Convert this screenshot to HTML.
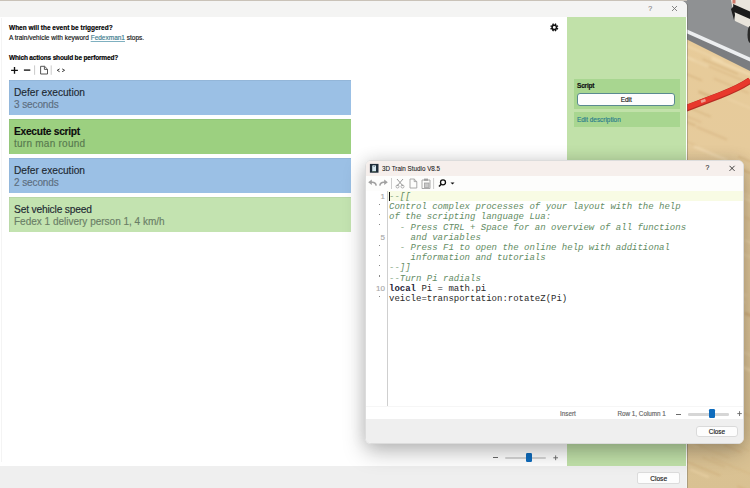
<!DOCTYPE html>
<html><head><meta charset="utf-8">
<style>
*{box-sizing:border-box;margin:0;padding:0}
html,body{width:750px;height:488px;overflow:hidden}
body{position:relative;font-family:"Liberation Sans",sans-serif;color:#1a1a1a;-webkit-text-stroke:0.15px currentColor;
background:linear-gradient(160deg,#e2c697 0%,#d9b987 40%,#dcc192 70%,#d3b483 100%);}
.abs{position:absolute}
.t{position:absolute;white-space:pre;line-height:1}
/* scene */
#scene{position:absolute;left:686px;top:0;width:64px;height:488px;overflow:hidden}
/* main dialog */
#main{position:absolute;left:0;top:1px;width:687px;height:487px;background:#fff;border-radius:0 6px 0 0}
#rborder{position:absolute;left:686px;top:16px;width:1px;height:472px;background:rgba(255,255,255,0.35)}
#rline{position:absolute;left:687px;top:4px;width:1px;height:484px;background:rgba(90,90,80,0.35)}
#topline{position:absolute;left:0;top:0;width:687px;height:1px;background:#c9c2b8}
#tb1{position:absolute;left:0;top:0;width:687px;height:16px;background:#f4f4f3;border-radius:0 6px 0 0}
#green{position:absolute;left:567px;top:16px;width:119px;height:450px;background:#c1e1a9}
#bb1{position:absolute;left:0;top:465px;width:687px;height:23px;background:#efefef}
.card{position:absolute;left:9px;width:342px;height:35px;box-shadow:inset 0 1px 0 rgba(0,0,0,0.05),inset 1px 0 0 rgba(0,0,0,0.04)}
.card .a{position:absolute;left:5px;top:7.7px;letter-spacing:-0.03px;font-size:10.2px;line-height:1;white-space:pre;color:#1e2a33}
.card .b{position:absolute;left:5px;top:20.4px;letter-spacing:-0.1px;font-size:10px;line-height:1;white-space:pre;color:#5d6e7f}
.blue{background:#9bc0e5}
.g1{background:#9cd080}
.g2{background:#c3e3b0}
.btn{position:absolute;background:#fdfdfd;border:1px solid #d3d3d3;border-radius:3px;font-size:6.4px;text-align:center;color:#1a1a1a}
/* dialog 2 */
#d2shadow{position:absolute;left:365px;top:160px;width:379px;height:284px;border-radius:6px;box-shadow:0 8px 22px rgba(0,0,0,0.26),0 0 16px rgba(0,0,0,0.10)}
#d2{position:absolute;left:365px;top:160px;width:379px;height:284px;background:#fff;border-radius:6px;overflow:hidden;border:1px solid #dcdcdc}
#tb2{position:absolute;left:0;top:0;width:100%;height:15px;background:#f6efec}
#tool2{position:absolute;left:0;top:15px;width:100%;height:15px;background:#fdfdfc}
#editor{position:absolute;left:0;top:30px;width:100%;height:215px;background:#fff}
#gutterline{position:absolute;left:21px;top:30px;width:1px;height:215px;background:#cfcfcf}
#hl{position:absolute;left:22px;top:30px;width:356px;height:10px;background:#f8fbe4}
.code{position:absolute;left:23px;font-family:"Liberation Mono",monospace;font-size:9px;line-height:10.2px;white-space:pre;-webkit-text-stroke:0}
.cm{color:#638c64;font-style:italic}
.kw{color:#25253a;font-weight:bold}
.nm{color:#2a2a2a}
.dot{position:absolute;left:12.5px;width:1.2px;height:1.2px;background:#8a8a8a}
.ln{position:absolute;right:358px;font-family:"Liberation Sans",sans-serif;font-size:8px;color:#a8a8a8;text-align:right;white-space:pre}
#status2{position:absolute;left:0;top:245px;width:100%;height:13px;background:#fff;border-top:1px solid #f6f6f6}
#bb2{position:absolute;left:0;top:258px;width:100%;height:25px;background:#efefef}
</style></head><body>

<div id="scene">
  <svg width="64" height="488" style="position:absolute;left:0;top:0">
    <defs>
      <linearGradient id="wood" x1="0" y1="0" x2="0" y2="1">
        <stop offset="0" stop-color="#e8cb98"/>
        <stop offset="0.3" stop-color="#e6cb9c"/>
        <stop offset="0.7" stop-color="#dfc699"/>
        <stop offset="1" stop-color="#d9c192"/>
      </linearGradient>
      <filter id="blur1"><feGaussianBlur stdDeviation="0.9"/></filter>
    </defs>
    <rect x="0" y="0" width="64" height="488" fill="url(#wood)"/>
    <g filter="url(#blur1)"><path d="M-13.1,100.9 L24.7,116.8" stroke="#c79f68" stroke-opacity="0.55" stroke-width="1.2"/><path d="M16.4,457.6 L39.0,467.0" stroke="#c79f68" stroke-opacity="0.43" stroke-width="1.1"/><path d="M-39.7,229.5 L4.3,248.0" stroke="#c79f68" stroke-opacity="0.58" stroke-width="2.1"/><path d="M16.5,59.1 L52.0,74.0" stroke="#c79f68" stroke-opacity="0.59" stroke-width="1.1"/><path d="M47.9,166.1 L67.9,174.5" stroke="#c79f68" stroke-opacity="0.47" stroke-width="2.0"/><path d="M27.7,78.4 L62.7,93.1" stroke="#d0aa75" stroke-opacity="0.41" stroke-width="2.0"/><path d="M-42.8,58.0 L-20.6,67.3" stroke="#f6e2bb" stroke-opacity="0.43" stroke-width="1.6"/><path d="M16.8,243.0 L42.2,253.7" stroke="#d0aa75" stroke-opacity="0.51" stroke-width="1.4"/><path d="M15.5,276.8 L61.1,296.0" stroke="#f3dcb2" stroke-opacity="0.39" stroke-width="2.8"/><path d="M-36.5,226.5 L5.0,243.9" stroke="#d0aa75" stroke-opacity="0.58" stroke-width="1.8"/><path d="M59.7,66.5 L94.2,81.0" stroke="#f6e2bb" stroke-opacity="0.40" stroke-width="1.6"/><path d="M6.6,404.5 L24.0,411.9" stroke="#c79f68" stroke-opacity="0.58" stroke-width="1.9"/><path d="M25.7,58.5 L65.3,75.1" stroke="#f6e2bb" stroke-opacity="0.60" stroke-width="2.5"/><path d="M-17.6,211.3 L20.8,227.5" stroke="#c79f68" stroke-opacity="0.58" stroke-width="1.6"/><path d="M19.6,262.0 L42.3,271.5" stroke="#f6e2bb" stroke-opacity="0.34" stroke-width="1.4"/><path d="M-5.4,439.6 L12.4,447.1" stroke="#f3dcb2" stroke-opacity="0.42" stroke-width="1.5"/><path d="M-34.4,232.3 L-0.1,246.7" stroke="#f3dcb2" stroke-opacity="0.60" stroke-width="2.2"/><path d="M-6.6,138.5 L11.3,146.0" stroke="#d0aa75" stroke-opacity="0.37" stroke-width="1.4"/><path d="M5.3,306.9 L29.5,317.1" stroke="#c79f68" stroke-opacity="0.34" stroke-width="2.0"/><path d="M19.5,179.7 L38.9,187.9" stroke="#f6e2bb" stroke-opacity="0.59" stroke-width="2.2"/><path d="M34.3,244.6 L79.8,263.7" stroke="#f6e2bb" stroke-opacity="0.42" stroke-width="1.7"/><path d="M-38.2,328.1 L-21.0,335.3" stroke="#c79f68" stroke-opacity="0.60" stroke-width="1.8"/><path d="M-37.5,312.3 L-18.9,320.1" stroke="#f6e2bb" stroke-opacity="0.35" stroke-width="1.2"/><path d="M-8.5,42.0 L37.1,61.1" stroke="#f6e2bb" stroke-opacity="0.41" stroke-width="2.1"/><path d="M58.9,313.1 L90.5,326.3" stroke="#c79f68" stroke-opacity="0.55" stroke-width="2.8"/><path d="M3.1,257.4 L21.1,265.0" stroke="#c79f68" stroke-opacity="0.52" stroke-width="2.3"/><path d="M4.6,355.3 L37.6,369.2" stroke="#d0aa75" stroke-opacity="0.59" stroke-width="2.0"/><path d="M-33.3,285.3 L-17.3,292.0" stroke="#f6e2bb" stroke-opacity="0.39" stroke-width="2.2"/><path d="M-39.6,427.4 L-6.5,441.3" stroke="#d0aa75" stroke-opacity="0.41" stroke-width="1.4"/><path d="M11.7,266.3 L49.0,281.9" stroke="#f6e2bb" stroke-opacity="0.54" stroke-width="2.8"/><path d="M47.2,408.9 L90.8,427.2" stroke="#d0aa75" stroke-opacity="0.36" stroke-width="1.9"/><path d="M33.3,495.1 L76.0,513.0" stroke="#f3dcb2" stroke-opacity="0.38" stroke-width="2.2"/><path d="M59.0,240.2 L106.8,260.3" stroke="#f6e2bb" stroke-opacity="0.59" stroke-width="1.7"/><path d="M-24.9,136.6 L-3.0,145.8" stroke="#d0aa75" stroke-opacity="0.44" stroke-width="2.8"/><path d="M19.6,30.9 L66.4,50.6" stroke="#f6e2bb" stroke-opacity="0.54" stroke-width="1.2"/><path d="M25.3,457.6 L67.7,475.4" stroke="#d0aa75" stroke-opacity="0.44" stroke-width="1.3"/><path d="M40.0,186.3 L83.0,204.4" stroke="#f3dcb2" stroke-opacity="0.44" stroke-width="2.3"/><path d="M-40.3,104.7 L9.4,125.6" stroke="#c79f68" stroke-opacity="0.35" stroke-width="2.6"/><path d="M41.9,98.7 L85.9,117.2" stroke="#f3dcb2" stroke-opacity="0.50" stroke-width="1.6"/><path d="M12.5,91.6 L28.0,98.1" stroke="#c79f68" stroke-opacity="0.46" stroke-width="2.7"/><path d="M-0.5,439.7 L43.4,458.2" stroke="#d0aa75" stroke-opacity="0.31" stroke-width="1.4"/><path d="M7.1,388.9 L33.5,400.0" stroke="#f6e2bb" stroke-opacity="0.43" stroke-width="1.2"/><path d="M53.7,196.3 L84.8,209.3" stroke="#f6e2bb" stroke-opacity="0.54" stroke-width="1.9"/><path d="M44.3,442.7 L63.9,451.0" stroke="#d0aa75" stroke-opacity="0.46" stroke-width="1.0"/><path d="M0.2,116.1 L15.3,122.4" stroke="#d0aa75" stroke-opacity="0.35" stroke-width="1.9"/><path d="M32.7,291.5 L59.1,302.6" stroke="#f6e2bb" stroke-opacity="0.46" stroke-width="1.9"/><path d="M38.5,445.1 L55.5,452.3" stroke="#d0aa75" stroke-opacity="0.38" stroke-width="2.4"/><path d="M7.9,294.0 L49.5,311.5" stroke="#c79f68" stroke-opacity="0.43" stroke-width="2.1"/><path d="M7.6,270.7 L46.9,287.2" stroke="#f3dcb2" stroke-opacity="0.45" stroke-width="2.5"/><path d="M7.9,146.4 L41.2,160.4" stroke="#f6e2bb" stroke-opacity="0.58" stroke-width="2.6"/><path d="M-26.9,240.3 L2.7,252.8" stroke="#f3dcb2" stroke-opacity="0.43" stroke-width="1.1"/><path d="M-22.6,64.4 L15.9,80.5" stroke="#c79f68" stroke-opacity="0.57" stroke-width="1.3"/><path d="M31.6,340.3 L51.6,348.7" stroke="#d0aa75" stroke-opacity="0.59" stroke-width="1.4"/><path d="M58.6,217.2 L90.6,230.6" stroke="#d0aa75" stroke-opacity="0.35" stroke-width="1.8"/><path d="M8.8,189.4 L30.6,198.6" stroke="#f6e2bb" stroke-opacity="0.33" stroke-width="1.7"/><path d="M-11.5,245.6 L28.1,262.2" stroke="#f3dcb2" stroke-opacity="0.40" stroke-width="2.1"/><path d="M8.4,60.2 L57.9,81.0" stroke="#d0aa75" stroke-opacity="0.59" stroke-width="1.2"/><path d="M-19.7,48.6 L22.5,66.4" stroke="#f6e2bb" stroke-opacity="0.53" stroke-width="2.5"/><path d="M46.9,347.7 L95.0,367.9" stroke="#f3dcb2" stroke-opacity="0.34" stroke-width="2.7"/><path d="M15.0,359.2 L33.2,366.8" stroke="#c79f68" stroke-opacity="0.54" stroke-width="1.3"/><path d="M52.1,156.4 L67.7,162.9" stroke="#c79f68" stroke-opacity="0.54" stroke-width="1.2"/><path d="M47.6,61.3 L92.8,80.3" stroke="#f3dcb2" stroke-opacity="0.30" stroke-width="2.8"/><path d="M-2.4,460.3 L34.4,475.7" stroke="#c79f68" stroke-opacity="0.46" stroke-width="1.4"/><path d="M-37.5,105.9 L-20.8,112.9" stroke="#d0aa75" stroke-opacity="0.58" stroke-width="2.1"/><path d="M10.5,126.8 L41.1,139.6" stroke="#d0aa75" stroke-opacity="0.38" stroke-width="2.4"/><path d="M63.4,47.4 L79.0,53.9" stroke="#f6e2bb" stroke-opacity="0.47" stroke-width="1.3"/><path d="M4.1,469.3 L22.8,477.1" stroke="#f3dcb2" stroke-opacity="0.50" stroke-width="2.0"/><path d="M51.3,486.0 L77.1,496.9" stroke="#d0aa75" stroke-opacity="0.59" stroke-width="1.6"/><path d="M44.9,362.2 L82.1,377.8" stroke="#f3dcb2" stroke-opacity="0.60" stroke-width="2.8"/><path d="M45.4,36.7 L82.3,52.2" stroke="#f6e2bb" stroke-opacity="0.43" stroke-width="1.1"/></g>
    <polygon points="0,0 64,0 64,71 0,39" fill="#7b7d80"/>
    <polygon points="0,0 64,0 64,58 0,29" fill="#8f9193"/>
    <polygon points="0,29 64,57.5 64,61.5 0,33" fill="#eceef0"/>
    <!-- vehicle -->
    <polygon points="45,0 64,0 64,28 49,21" fill="#e9e5dc"/>
    <polygon points="47,4 64,11.5 64,19 48,12" fill="#1c1c1c"/>
    <polygon points="45,9 48,6 49,15 48,20" fill="#1c1c1c"/>
    <ellipse cx="64" cy="34.5" rx="2.5" ry="8.5" fill="#2a2a2a"/>
    <rect x="46.5" y="0" width="3" height="3.5" fill="#d07a6a"/>
    <!-- red rail -->
    <path d="M0,108.3 L34,95.4 Q55,87 64,80.5" stroke="#b82a22" stroke-width="6.6" fill="none"/>
    <path d="M0,107.8 L34,94.9 Q55,86.5 64,80" stroke="#e8382c" stroke-width="5.2" fill="none"/>
    <path d="M15,101.8 L19.5,100" stroke="#f0c8b8" stroke-width="2.6" opacity="0.7"/>
  </svg>
</div>

<div class="abs" style="left:660px;top:0;width:30px;height:12px;background:#8f9193"></div>
<div id="topline"></div>
<div id="main">
  <div id="tb1"></div>
  <div class="t" style="left:648.3px;top:3.6px;font-size:7px;color:#888">?</div>
  <svg class="abs" style="left:671px;top:3.7px" width="7" height="7"><path d="M1,1 L6,6 M6,1 L1,6" stroke="#777" stroke-width="0.9"/></svg>

  <div class="t" style="left:9px;top:24px;font-size:6.5px;font-weight:bold;color:#000">When will the event be triggered?</div>
  <div class="t" style="left:9px;top:33.5px;font-size:6.5px;color:#111">A train/vehicle with keyword <span style="color:#3a7a8c;text-decoration:underline;text-decoration-color:#7fb0c0;text-underline-offset:0.5px">Fedexman1</span> stops.</div>
  <div class="t" style="left:9px;top:53.5px;font-size:6.5px;letter-spacing:-0.16px;font-weight:bold;color:#000">Which actions should be performed?</div>

  <!-- toolbar -->
  <svg class="abs" style="left:8px;top:63px" width="64" height="12">
    <path d="M3.1,6.3 H9.9 M6.5,2.9 V9.7" stroke="#111" stroke-width="1.35"/>
    <path d="M15.9,6.1 H22.3" stroke="#111" stroke-width="1.35"/>
    <path d="M26.6,1.4 V10.8" stroke="#c4c4c4" stroke-width="0.9"/>
    <path d="M32.6,2.3 H36.6 L39.5,5.2 V10 H32.6 Z M36.4,2.4 V5.4 H39.4" stroke="#444" stroke-width="0.9" fill="none"/>
    <path d="M43.2,1.4 V10.8" stroke="#c4c4c4" stroke-width="0.9"/>
    <path d="M51.6,4.9 L49.2,6.3 L51.6,7.7 M54.2,4.9 L56.6,6.3 L54.2,7.7" stroke="#333" stroke-width="0.95" fill="none"/>
  </svg>

  <div class="card blue" style="top:79px"><div class="a">Defer execution</div><div class="b">3 seconds</div></div>
  <div class="card g1" style="top:118px"><div class="a" style="font-weight:bold;color:#0d0d0d;letter-spacing:-0.27px">Execute script</div><div class="b" style="color:#587a4f;letter-spacing:0.25px">turn man round</div></div>
  <div class="card blue" style="top:157px"><div class="a">Defer execution</div><div class="b">2 seconds</div></div>
  <div class="card g2" style="top:196px"><div class="a" style="letter-spacing:-0.15px">Set vehicle speed</div><div class="b" style="color:#6a7e66;letter-spacing:0">Fedex 1 delivery person 1, 4 km/h</div></div>

  <!-- gear -->
  <svg class="abs" style="left:549px;top:21px" width="11" height="11" viewBox="0 0 11 11">
    <circle cx="5.3" cy="5.4" r="2.2" fill="none" stroke="#111" stroke-width="1.5"/>
    <rect x="7.60" y="5.91" width="1.5" height="1.5" transform="rotate(22.5 8.35 6.66)" fill="#111"/><rect x="5.81" y="7.70" width="1.5" height="1.5" transform="rotate(67.5 6.56 8.45)" fill="#111"/><rect x="3.29" y="7.70" width="1.5" height="1.5" transform="rotate(112.5 4.04 8.45)" fill="#111"/><rect x="1.50" y="5.91" width="1.5" height="1.5" transform="rotate(157.5 2.25 6.66)" fill="#111"/><rect x="1.50" y="3.39" width="1.5" height="1.5" transform="rotate(202.5 2.25 4.14)" fill="#111"/><rect x="3.29" y="1.60" width="1.5" height="1.5" transform="rotate(247.5 4.04 2.35)" fill="#111"/><rect x="5.81" y="1.60" width="1.5" height="1.5" transform="rotate(292.5 6.56 2.35)" fill="#111"/><rect x="7.60" y="3.39" width="1.5" height="1.5" transform="rotate(337.5 8.35 4.14)" fill="#111"/>
  </svg>

  <div id="green"></div>
  <div class="abs" style="left:574px;top:78px;width:106px;height:30px;background:#a8d690"></div>
  <div class="t" style="left:577px;top:82px;font-size:6.6px;letter-spacing:-0.25px;font-weight:bold;color:#111">Script</div>
  <div class="btn" style="left:577px;top:92.3px;width:98.3px;height:12.5px;border-color:#5a8a90;line-height:11.6px;font-size:6.6px;letter-spacing:-0.1px">Edit</div>
  <div class="abs" style="left:574px;top:111px;width:106px;height:15px;background:#a8d690"></div>
  <div class="t" style="left:577px;top:116.3px;font-size:6.4px;color:#2a7d8c">Edit description</div>

  <div id="bb1"></div>
  <div class="abs" style="left:1px;top:17px;width:1px;height:444px;background:#f4f4f4"></div>
  <div id="rborder"></div>
  <!-- zoom slider main -->
  <div class="abs" style="left:493.3px;top:456.2px;width:4.4px;height:1.1px;background:#6a6a6a"></div>
  <div class="abs" style="left:504.7px;top:455.7px;width:41px;height:2.6px;border-radius:1.3px;background:#d6d6d6"></div>
  <div class="abs" style="left:525.8px;top:451.6px;width:6.2px;height:9.2px;background:#0f6cbd;border-radius:1.2px"></div>
  <svg class="abs" style="left:553px;top:454.3px" width="6" height="6"><path d="M0.3,2.8 H5 M2.65,0.4 V5.2" stroke="#666" stroke-width="0.9"/></svg>
  <div class="btn" style="left:637px;top:471.2px;width:43.3px;height:12.3px;line-height:11.4px;border-radius:2px;border-color:#dcdcdc;font-size:6.6px;color:#222">Close</div>
</div>

<div id="rline"></div>
<div id="d2shadow"></div>
<div id="d2">
  <div id="tb2"></div>
  <svg class="abs" style="left:3px;top:2px" width="10" height="10" viewBox="0 0 10 10">
    <rect x="0.9" y="0.9" width="8.6" height="8.8" fill="#1e2d3a"/>
    <path d="M3.2,3 Q3.2,1.9 5.1,1.9 Q7,1.9 7,3 V8.8 H3.2 Z" fill="#d5e6ef"/>
    <rect x="4.6" y="2.6" width="1.2" height="0.9" fill="#1e2d3a"/>
    <rect x="3.2" y="8.3" width="3.8" height="0.8" fill="#2a4030"/>
  </svg>
  <div class="t" style="left:16px;top:4.7px;font-size:6.3px;color:#1a1a1a;-webkit-text-stroke:0.08px #1a1a1a">3D Train Studio V8.5</div>
  <div class="t" style="left:339.5px;top:4.1px;font-size:6.8px;color:#333">?</div>
  <svg class="abs" style="left:362.5px;top:3.5px" width="7" height="7"><path d="M0.5,0.8 L5.6,5.9 M5.6,0.8 L0.5,5.9" stroke="#222" stroke-width="0.85"/></svg>

  <div id="tool2"></div>
  <svg class="abs" style="left:0;top:15px" width="100" height="15">
    <path d="M2.2,6.3 L5.8,3.6 L5.8,9 Z" fill="#a0a0a0"/><path d="M5,6.3 Q9.5,5.6 10.2,9.6" stroke="#a0a0a0" stroke-width="1.6" fill="none"/>
    <path d="M21.8,6.3 L18.2,3.6 L18.2,9 Z" fill="#a0a0a0"/><path d="M19,6.3 Q14.5,5.6 13.8,9.6" stroke="#a0a0a0" stroke-width="1.6" fill="none"/>
    <path d="M25.5,2 V13" stroke="#ccc" stroke-width="1"/>
    <path d="M31,3 L37,10 M37,3 L31,10" stroke="#9a9a9a" stroke-width="1"/>
    <circle cx="31.5" cy="10.5" r="1.5" fill="none" stroke="#9a9a9a" stroke-width="0.8"/>
    <circle cx="36.5" cy="10.5" r="1.5" fill="none" stroke="#9a9a9a" stroke-width="0.8"/>
    <path d="M44,3 H48.2 L50.8,5.6 V12 H44 Z M48.2,3 V5.6 H50.8" stroke="#a0a0a0" stroke-width="0.9" fill="none"/>
    <path d="M56,4 H64 V12.5 H56 Z" stroke="#a0a0a0" stroke-width="0.9" fill="none"/>
    <rect x="58" y="2.6" width="4" height="2.2" fill="#a0a0a0"/>
    <rect x="58.5" y="7" width="4.5" height="4.5" fill="#c8c8c8" stroke="#a0a0a0" stroke-width="0.8"/>
    <path d="M67.6,2 V13" stroke="#ccc" stroke-width="1"/>
    <circle cx="77" cy="6.3" r="2.5" fill="none" stroke="#111" stroke-width="1.3"/>
    <path d="M75.2,8.2 L73,10.5" stroke="#111" stroke-width="1.5"/>
    <path d="M84.5,6.5 H88.5 L86.5,8.5 Z" fill="#111"/>
  </svg>

  <div id="editor"></div>
  <div id="hl"></div>
  <div id="gutterline"></div>
  <div class="abs" style="left:22.5px;top:31px;width:1.5px;height:8.5px;background:#111"></div>
  <div class="ln" style="top:30.50px">1</div>
  <div class="dot" style="top:42.70px"></div>
  <div class="dot" style="top:52.95px"></div>
  <div class="dot" style="top:63.20px"></div>
  <div class="ln" style="top:71.50px">5</div>
  <div class="dot" style="top:83.70px"></div>
  <div class="dot" style="top:93.95px"></div>
  <div class="dot" style="top:104.20px"></div>
  <div class="dot" style="top:114.45px"></div>
  <div class="ln" style="top:122.75px">10</div>
  <div class="dot" style="top:134.95px"></div>
  <div class="code" style="top:31px"><span class="cm">--[[
Control complex processes of your layout with the help
of the scripting language Lua:
  - Press CTRL + Space for an overview of all functions
    and variables
  - Press F1 to open the online help with additional
    information and tutorials
--]]
--Turn Pi radials</span>
<span class="kw">local</span><span class="nm"> Pi = math.pi
veicle=transportation:rotateZ(Pi)</span></div>

  <div id="status2"></div>
  <div class="t" style="left:194px;top:249.5px;font-size:6.3px;color:#666">Insert</div>
  <div class="t" style="left:251.5px;top:249.5px;font-size:6.3px;color:#666">Row 1, Column 1</div>
  <div class="abs" style="left:310.4px;top:252.5px;width:4.8px;height:1.1px;background:#6a6a6a"></div>
  <div class="abs" style="left:322.1px;top:252.2px;width:41px;height:2.6px;border-radius:1.3px;background:#d6d6d6"></div>
  <div class="abs" style="left:343.3px;top:247.9px;width:5.6px;height:9.1px;background:#0f6cbd;border-radius:1.2px"></div>
  <svg class="abs" style="left:370.5px;top:250.3px" width="6" height="6"><path d="M0.3,2.6 H4.8 M2.55,0.2 V5" stroke="#666" stroke-width="0.9"/></svg>
  <div id="bb2"></div>
  <div class="btn" style="left:329.6px;top:264.7px;width:42.7px;height:11.5px;line-height:9.8px;border-color:#dadada">Close</div>
</div>

</body></html>
